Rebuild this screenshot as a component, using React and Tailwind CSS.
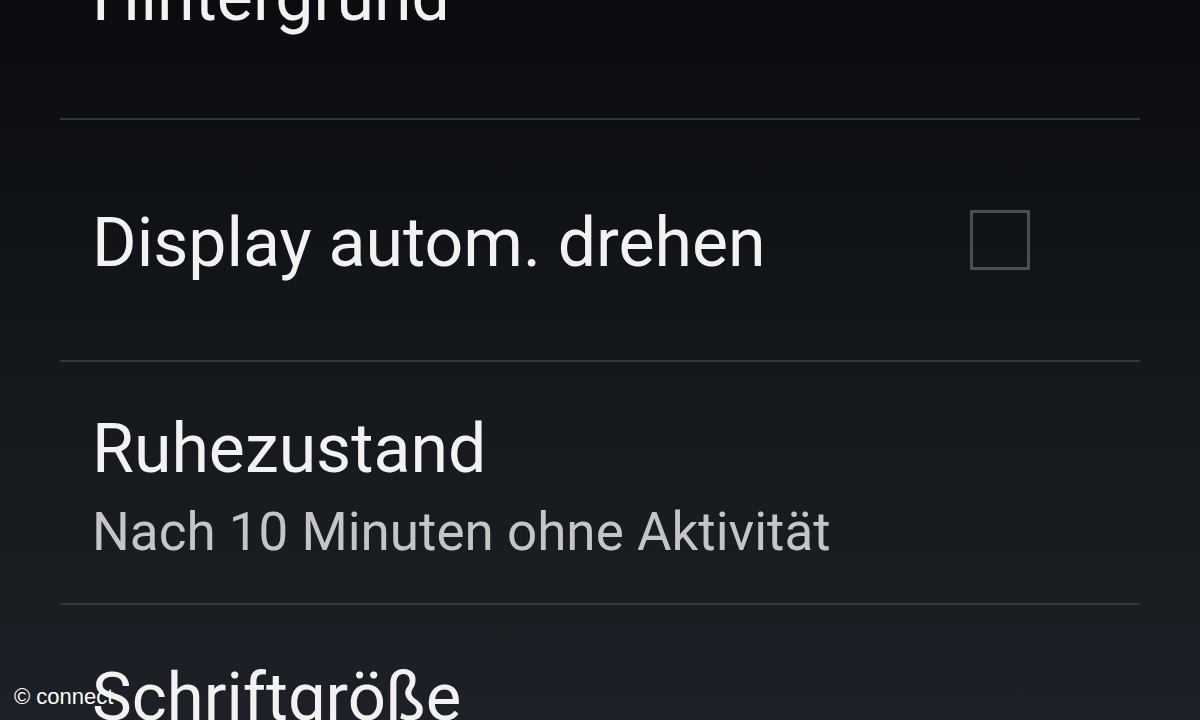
import React from "react";

const Divider = () => <div className="mx-[60px] h-[2px] shrink-0 bg-[#33363b]" />;

export default function App() {
  return (
    <main
      className="relative h-[720px] w-[1200px] overflow-hidden bg-gradient-to-b from-[#0a0c0f] via-[#14171b] to-[#1d2026] text-[#f2f2f2]"
      style={{ fontFamily: "Roboto, 'Noto Sans', sans-serif" }}
    >
      <div className="flex flex-col">
        {/* Hintergrund (cut off at top) */}
        <div className="h-[118px] shrink-0 pl-[92px]">
          <p className="-mt-[38px] text-[68px] leading-[70px]">Hintergrund</p>
        </div>
        <Divider />

        <div className="flex h-[240px] shrink-0 items-center justify-between pl-[92px] pr-[170px]">
          <p className="mt-[6px] text-[68px] leading-[70px]">Display autom. drehen</p>
          <div className="h-[60px] w-[60px] border-[3px] border-[#4a4d52]" />
        </div>
        <Divider />

        <div className="flex h-[241px] shrink-0 flex-col pl-[92px] pt-[52px]">
          <p className="text-[68px] leading-[70px]">Ruhezustand</p>
          <p className="mt-[22px] text-[53px] leading-[52px] text-[#c4c5c7]">
            Nach 10 Minuten ohne Aktivität
          </p>
        </div>
        <Divider />

        <div className="pl-[92px] pt-[57px]">
          <p className="text-[67px] leading-[70px]">Schriftgröße</p>
        </div>
      </div>

      <span
        className="absolute bottom-[12px] left-[14px] text-[22px] leading-none text-white"
        style={{ fontFamily: "'Liberation Sans', Arial, sans-serif" }}
      >
        © connect
      </span>
    </main>
  );
}
